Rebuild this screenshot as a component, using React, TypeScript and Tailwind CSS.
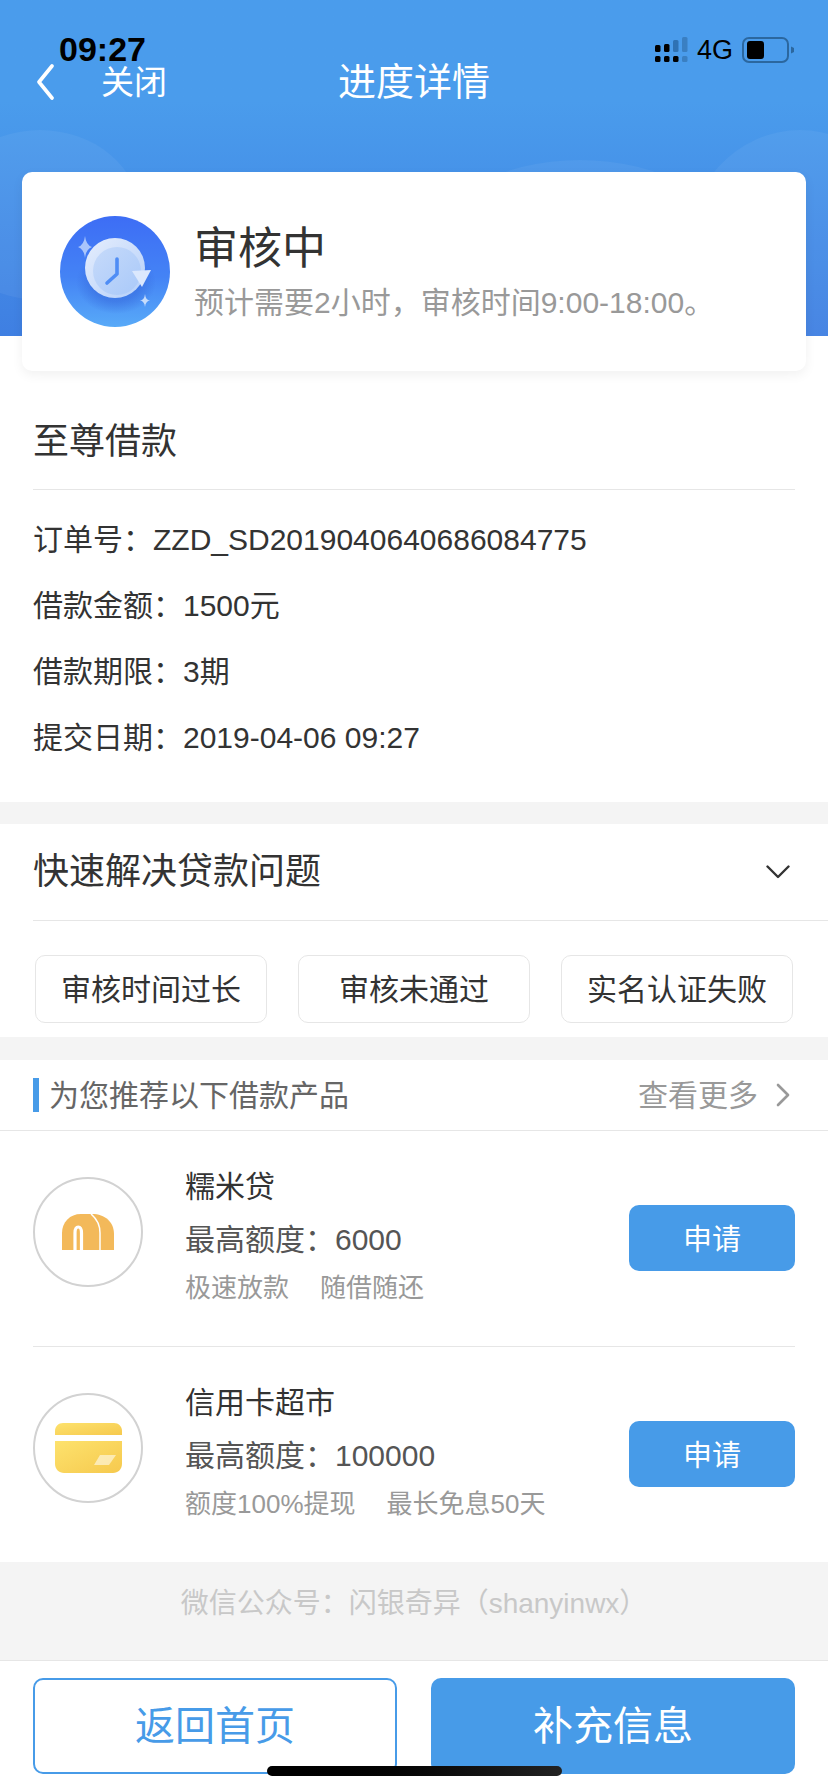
import { ChevronRight } from 'lucide-react';

const orderRows = [
  { label: '订单号：', value: 'ZZD_SD2019040640686084775' },
  { label: '借款金额：', value: '1500元' },
  { label: '借款期限：', value: '3期' },
  { label: '提交日期：', value: '2019-04-06 09:27' },
];

const issues = ['审核时间过长', '审核未通过', '实名认证失败'];

function SignalIcon() {
  return (
    <svg width="33" height="26" viewBox="0 0 33 26">
      <rect x="0" y="8" width="5.5" height="7" rx="1.5" fill="#000" />
      <rect x="0" y="19" width="5.5" height="6" rx="1.5" fill="#000" />
      <rect x="9" y="7" width="5.5" height="8" rx="1.5" fill="#000" />
      <rect x="9" y="19" width="5.5" height="6" rx="1.5" fill="#000" />
      <rect x="18" y="3" width="5.5" height="12" rx="1.5" fill="#2f72b4" />
      <rect x="18" y="19" width="5.5" height="6" rx="1.5" fill="#000" />
      <rect x="27" y="0" width="5.5" height="15" rx="1.5" fill="#3a7fc2" />
      <rect x="27" y="19" width="5.5" height="6" rx="1.5" fill="#3a7fc2" />
    </svg>
  );
}

function BatteryIcon() {
  return (
    <svg width="54" height="26" viewBox="0 0 54 26">
      <rect x="1" y="1" width="45" height="24" rx="6" fill="none" stroke="#2b679f" strokeWidth="2" />
      <rect x="5" y="4" width="17" height="18" rx="3" fill="#000" />
      <path d="M49 9.5 L52 11 V15 L49 16.5 Z" fill="#2b679f" />
    </svg>
  );
}

function HeaderClouds() {
  return (
    <svg className="absolute inset-0" width="828" height="336" viewBox="0 0 828 336">
      <ellipse cx="40" cy="215" rx="100" ry="85" fill="#ffffff" fillOpacity="0.05" />
      <ellipse cx="580" cy="250" rx="150" ry="90" fill="#ffffff" fillOpacity="0.05" />
      <ellipse cx="800" cy="255" rx="115" ry="125" fill="#ffffff" fillOpacity="0.05" />
    </svg>
  );
}

function ClockBadge() {
  return (
    <svg width="110" height="111" viewBox="0 0 110 111">
      <defs>
        <linearGradient id="badgeBg" x1="0" y1="0" x2="0" y2="1">
          <stop offset="0" stopColor="#3d6df5" />
          <stop offset="0.55" stopColor="#4483f5" />
          <stop offset="1" stopColor="#58aaf8" />
        </linearGradient>
        <radialGradient id="badgeShade">
          <stop offset="0.6" stopColor="#3568dc" stopOpacity="0.55" />
          <stop offset="1" stopColor="#3568dc" stopOpacity="0" />
        </radialGradient>
        <linearGradient id="clockRing" x1="0" y1="0" x2="1" y2="1">
          <stop offset="0" stopColor="#e6eefd" />
          <stop offset="1" stopColor="#b4cff9" />
        </linearGradient>
        <linearGradient id="clockFace" x1="0" y1="0" x2="1" y2="1">
          <stop offset="0" stopColor="#c6dafa" />
          <stop offset="1" stopColor="#a9c9f9" />
        </linearGradient>
      </defs>
      <ellipse cx="55" cy="55.5" rx="55" ry="55.5" fill="url(#badgeBg)" />
      <ellipse cx="56" cy="66" rx="40" ry="32" fill="url(#badgeShade)" />
      <circle cx="55" cy="52" r="30" fill="url(#clockRing)" />
      <circle cx="57" cy="55" r="24" fill="url(#clockFace)" />
      <path d="M72 55 L91 54 L82 71 Z" fill="#dbe8fd" />
      <path d="M57 43 V58 L47 67" fill="none" stroke="#4f8df5" strokeWidth="3.6" strokeLinecap="round" strokeLinejoin="round" />
      <path d="M25 20 Q26 29 32 31 Q26 33 25 42 Q24 33 18 31 Q24 29 25 20 Z" fill="#a9c5fb" />
      <path d="M85 78 Q85.6 84 90 84.5 Q85.6 85 85 91 Q84.4 85 80 84.5 Q84.4 84 85 78 Z" fill="#c6dcfb" />
    </svg>
  );
}

function RiceLogo() {
  return (
    <svg width="52" height="36" viewBox="0 0 52 36">
      <path d="M0 36 V19 C0 8 8 0 19 0 H30 C43 0 52 8 52 20 V36 Z" fill="#f3b95a" />
      <path d="M29 0 C35 5 38 11 38 19 V36" fill="none" stroke="#fff" strokeWidth="1.5" />
      <path d="M13 36 V19 C13 11 19.5 11 19.5 19 V36" fill="none" stroke="#fff" strokeWidth="3.2" />
    </svg>
  );
}

function CardLogo() {
  return (
    <svg width="67" height="50" viewBox="0 0 67 50">
      <defs>
        <linearGradient id="cardFill" x1="0" y1="0" x2="1" y2="1">
          <stop offset="0" stopColor="#fde26d" />
          <stop offset="1" stopColor="#f6c94e" />
        </linearGradient>
      </defs>
      <path d="M0 12 V8 C0 3.5 3.5 0 8 0 H59 C63.5 0 67 3.5 67 8 V12 Z" fill="url(#cardFill)" />
      <path d="M0 18 H67 V41 C67 46 63 50 58 50 H9 C4 50 0 46 0 41 Z" fill="url(#cardFill)" />
      <path d="M45 32 H61 L54 42 H39 Z" fill="#ffffff" fillOpacity="0.55" />
    </svg>
  );
}

function ProductRow({ logo, name, amount, tags }: { logo: React.ReactNode; name: string; amount: string; tags: string[] }) {
  return (
    <div className="flex h-[215px] items-center pr-[33px]">
      <div className="-mt-[13px] flex h-[110px] w-[110px] shrink-0 items-center justify-center rounded-full border-2 border-[#d2d2d2]">
        {logo}
      </div>
      <div className="-mt-[6px] ml-[42px] flex-1">
        <div className="text-[30px] leading-[52px] text-[#333]">{name}</div>
        <div className="text-[30px] leading-[53px] text-[#555]">最高额度：{amount}</div>
        <div className="flex gap-[31px] text-[26px] leading-[45px] text-[#999]">
          {tags.map((tag) => (
            <span key={tag}>{tag}</span>
          ))}
        </div>
      </div>
      <button className="-mt-[2px] h-[66px] w-[166px] rounded-[10px] bg-[#479be8] pt-[6px] text-[29px] text-white">申请</button>
    </div>
  );
}

export default function App() {
  return (
    <div className="relative h-[1792px] w-[828px] overflow-hidden bg-white font-['Liberation_Sans','Noto_Sans_CJK_SC',sans-serif]">
      {/* Header */}
      <div className="relative h-[336px] bg-gradient-to-b from-[#4a9cec] from-30% to-[#3f7fe2]">
        <HeaderClouds />
        <div className="relative box-content flex h-[40px] items-center justify-between pl-[59px] pr-[32px] pt-[30px]">
          <span className="-mt-[2px] text-[34px] font-bold leading-none text-black">09:27</span>
          <div className="flex items-center gap-[9px]">
            <SignalIcon />
            <span className="text-[27px] leading-none text-black">4G</span>
            <BatteryIcon />
          </div>
        </div>
        <div className="relative -mt-[8px] flex h-[40px] items-center pl-[36px]">
          <svg width="18" height="36" viewBox="0 0 18 36">
            <path d="M16 2 L3 18 L16 34" fill="none" stroke="#fff" strokeWidth="3.6" strokeLinecap="round" strokeLinejoin="round" />
          </svg>
          <span className="ml-[47px] text-[33px] leading-none text-white">关闭</span>
          <span className="absolute left-0 right-0 text-center text-[38px] leading-none text-white">进度详情</span>
        </div>

        {/* Status card */}
        <div className="relative mx-[22px] mt-[70px] flex h-[199px] items-center rounded-[10px] bg-white pl-[38px] shadow-[0_4px_12px_rgba(0,0,0,0.06)]">
          <ClockBadge />
          <div className="ml-[24px] mt-[3px]">
            <div className="text-[44px] leading-[60px] text-[#333]">审核中</div>
            <div className="text-[30px] leading-[48px] text-[#999]">预计需要2小时，审核时间9:00-18:00。</div>
          </div>
        </div>
      </div>

      {/* Order info */}
      <section className="mt-[35px] px-[33px] pb-[32px]">
        <div className="flex h-[119px] items-center border-b border-[#e6e6e6] pt-[24px] text-[36px] text-[#333]">至尊借款</div>
        <div className="pt-[16px]">
          {orderRows.map((row) => (
            <div key={row.label} className="flex h-[66px] items-center text-[30px] text-[#333]">
              <span>{row.label}</span>
              <span>{row.value}</span>
            </div>
          ))}
        </div>
      </section>

      <div className="h-[22px] bg-[#f4f4f4]" />

      {/* Quick help */}
      <section>
        <div className="ml-[33px] flex h-[97px] items-center justify-between border-b border-[#e6e6e6] pr-[38px] text-[36px] text-[#333]">
          <span>快速解决贷款问题</span>
          <svg width="24" height="14" viewBox="0 0 24 14">
            <path d="M1.5 1.5 L12 12 L22.5 1.5" fill="none" stroke="#333" strokeWidth="2.4" strokeLinecap="round" strokeLinejoin="round" />
          </svg>
        </div>
        <div className="flex justify-between px-[35px] pb-[14px] pt-[34px]">
          {issues.map((issue) => (
            <div key={issue} className="flex h-[68px] w-[232px] items-center justify-center rounded-[10px] border border-[#e6e6e6] text-[30px] text-[#333]">
              {issue}
            </div>
          ))}
        </div>
      </section>

      <div className="h-[23px] bg-[#f4f4f4]" />

      {/* Recommended products */}
      <section>
        <div className="flex h-[71px] items-center justify-between border-b border-[#e6e6e6] pl-[33px] pr-[33px]">
          <div className="flex items-center">
            <div className="h-[34px] w-[6px] bg-[#479be8]" />
            <span className="ml-[10px] text-[30px] text-[#666]">为您推荐以下借款产品</span>
          </div>
          <div className="flex items-center text-[30px] text-[#999]">
            <span className="-ml-[2px]">查看更多</span>
            <ChevronRight className="ml-[5px] -mr-[8px] h-[40px] w-[40px]" strokeWidth={1.6} />
          </div>
        </div>
        <div className="ml-[33px]">
          <ProductRow logo={<RiceLogo />} name="糯米贷" amount="6000" tags={['极速放款', '随借随还']} />
          <div className="mr-[33px] border-t border-[#e6e6e6]" />
          <ProductRow logo={<CardLogo />} name="信用卡超市" amount="100000" tags={['额度100%提现', '最长免息50天']} />
        </div>
      </section>

      {/* Footer note */}
      <div className="flex h-[99px] items-start justify-center border-b border-[#e6e6e6] bg-[#f4f4f4] pt-[21px] text-[28px] text-[#c8c8c8]">
        微信公众号：闪银奇异（shanyinwx）
      </div>

      {/* Bottom actions */}
      <div className="flex justify-between px-[33px] pt-[17px]">
        <button className="h-[96px] w-[364px] rounded-[10px] border-2 border-[#479be8] text-[40px] text-[#479be8]">返回首页</button>
        <button className="h-[96px] w-[364px] rounded-[10px] bg-[#479be8] text-[40px] text-white">补充信息</button>
      </div>

      {/* Home indicator */}
      <div className="absolute left-[267px] top-[1766px] h-[10px] w-[295px] rounded-full bg-gradient-to-r from-black to-[#222]" />
    </div>
  );
}
